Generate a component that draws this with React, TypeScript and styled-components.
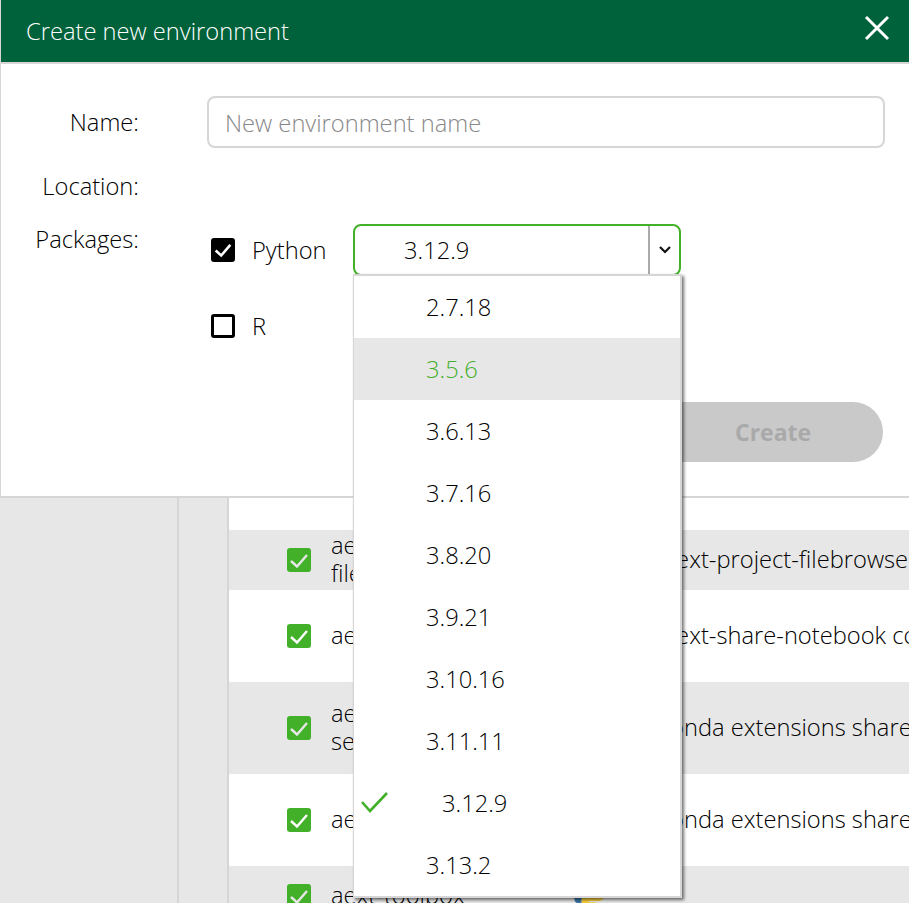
import React from "react";
import styled, { createGlobalStyle } from "styled-components";

const Global = createGlobalStyle`
  html, body { margin: 0; padding: 0; background: #fff; }
  body { width: 909px; height: 903px; overflow: hidden; font-family: "Open Sans", "Noto Sans", sans-serif; font-weight: 300; font-size: 23.7px; color: #000; }
  * { box-sizing: border-box; }
`;

const Page = styled.div`
  position: relative;
  width: 909px;
  height: 903px;
  overflow: hidden;
  padding-top: 496px;
`;

const Backdrop = styled.div`
  display: grid;
  grid-template-columns: 177px 2px 48px 2px 1fr;
  height: 407px;
  border-top: 2px solid #d6d6d6;
`;
const GreyCol = styled.div`background: #e7e7e7;`;
const Rule = styled.div`background: #d6d6d6;`;
const List = styled.div`
  padding-top: 32px;
  background: #fff;
  min-width: 0;
  overflow: hidden;
`;
const Row = styled.div<{ $grey?: boolean; $h: number }>`
  display: flex;
  align-items: center;
  height: ${(p) => p.$h}px;
  padding-left: 58px;
  background: ${(p) => (p.$grey ? "#e7e7e7" : "#fff")};
  line-height: 28px;
  white-space: nowrap;
`;
const RowCheck = styled.span`
  width: 24px;
  height: 24px;
  border-radius: 3px;
  background: #43b02a;
  display: flex;
  align-items: center;
  justify-content: center;
  flex: none;
  margin-right: 20px;
`;
const RowName = styled.div`
  width: 242px;
  flex: none;
  white-space: normal;
  padding-bottom: 2px;
`;
const RowDesc = styled.div`
  flex: none;
  padding-bottom: 2px;
`;
const Logo = styled.svg`
  flex: none;
  margin-right: 13px;
`;

const Dialog = styled.div`
  position: absolute;
  left: 0;
  top: 0;
  width: 909px;
  height: 496px;
  background: #fff;
  border-left: 1px solid #d6d6d6;
  display: flex;
  flex-direction: column;
`;
const Header = styled.div`
  height: 64px;
  flex: none;
  background: #00623b;
  border-bottom: 2px solid #d6d6d6;
  display: flex;
  align-items: center;
  justify-content: space-between;
  padding: 0 19px 0 25px;
  color: #fff;
`;
const Close = styled.svg`
  display: block;
  margin-bottom: 6px;
`;
const Form = styled.div`
  display: grid;
  grid-template-columns: 138px 1fr;
  column-gap: 68px;
  padding: 32px 24px 0 0;
`;
const Label = styled.div<{ $top: number }>`
  text-align: right;
  line-height: 30px;
  padding-top: ${(p) => p.$top}px;
`;
const NameInput = styled.div`
  height: 52px;
  border: 2px solid #d6d6d6;
  border-radius: 8px;
  padding-left: 16px;
  line-height: 50px;
  color: #888;
`;
const LocationValue = styled.div`height: 76px;`;
const Packages = styled.div`
  display: grid;
  grid-template-columns: 146px 328px;
  grid-auto-rows: 76px;
  align-items: start;
`;
const PackageLabel = styled.label`
  display: flex;
  align-items: center;
  gap: 17px;
  height: 52px;
  padding-left: 4px;
`;
const CheckBox = styled.span<{ $on?: boolean }>`
  width: 24px;
  height: 24px;
  flex: none;
  border-radius: 3px;
  border: 3px solid #000;
  background: ${(p) => (p.$on ? "#000" : "#fff")};
  display: flex;
  align-items: center;
  justify-content: center;
  & > svg { flex: none; }
`;
const Select = styled.div`
  height: 52px;
  border: 2px solid #43b02a;
  border-radius: 8px;
  display: flex;
  background: #fff;
`;
const SelectValue = styled.div`
  flex: 1;
  padding-left: 49px;
  line-height: 48px;
`;
const SelectArrow = styled.div`
  width: 31px;
  border-left: 2px solid #aaa;
  display: flex;
  align-items: center;
  justify-content: center;
`;
const Actions = styled.div`
  display: flex;
  justify-content: flex-end;
  margin-top: 26px;
  padding-right: 26px;
`;
const CreateButton = styled.div`
  width: 300px;
  height: 60px;
  border-radius: 30px;
  background: #c9c9c9;
  color: #a9a9a9;
  font-weight: 700;
  font-size: 23px;
  line-height: 60px;
  padding-left: 152px;
`;
const Menu = styled.div`
  position: absolute;
  left: 353px;
  top: 274px;
  width: 329px;
  height: 624px;
  background: #fff;
  border: solid #d6d6d6;
  border-width: 2px 2px 2px 1px;
  box-shadow: 2px 2px 3px rgba(0,0,0,0.55);
`;
const MenuItem = styled.div<{ $active?: boolean; $selected?: boolean }>`
  position: relative;
  height: 62px;
  line-height: 62px;
  padding-left: ${(p) => (p.$selected ? 88 : 72)}px;
  background: ${(p) => (p.$active ? "#e7e7e7" : "transparent")};
  color: ${(p) => (p.$active ? "#43b02a" : "#000")};
`;
const MenuCheck = styled.svg`position: absolute; left: 6px; top: 17px;`;

const Tick = ({ size, color, sw }: { size: number; color: string; sw: number }) => (
  <svg width={size} height={size} viewBox="0 0 24 24" fill="none">
    <path d="M4 12.5 L10 18 L20 6.5" stroke={color} strokeWidth={sw} />
  </svg>
);

const PythonLogo = () => (
  <Logo width="32" height="32" viewBox="0 0 26 26">
    <path d="M13 1c-5 0-6 2-6 4v3h6v1H5c-3 0-4 2-4 5s1 5 4 5h2v-3c0-2 2-4 4-4h5c2 0 3-1 3-3V5c0-2-2-4-6-4z" fill="#3a74a5" />
    <path d="M13 25c5 0 6-2 6-4v-3h-6v-1h8c3 0 4-2 4-5s-1-5-4-5h-2v3c0 2-2 4-4 4h-5c-2 0-3 1-3 3v4c0 2 2 4 6 4z" fill="#f7cf3d" />
  </Logo>
);

const versions = ["2.7.18", "3.5.6", "3.6.13", "3.7.16", "3.8.20", "3.9.21", "3.10.16", "3.11.11", "3.12.9", "3.13.2"];

const rows = [
  { h: 60, name: "aext-project-filebrowser-server", desc: "The aext-project-filebrowser-server", grey: true },
  { h: 92, name: "aext-panels", desc: "The aext-share-notebook core", grey: false },
  { h: 92, name: "aext-share-notebook-server", desc: "Anaconda extensions shared", grey: true },
  { h: 92, name: "aext-shared", desc: "Anaconda extensions shared", grey: false },
  { h: 60, name: "aext-toolbox", desc: "", grey: true },
];

export default function App() {
  return (
    <Page>
      <Global />
      <Backdrop>
        <GreyCol />
        <Rule />
        <GreyCol />
        <Rule />
        <List>
          {rows.map((r) => (
            <Row key={r.name} $grey={r.grey} $h={r.h}>
              <RowCheck><Tick size={27} color={r.grey ? "#e7e7e7" : "#fff"} sw={2.4} /></RowCheck>
              <RowName>{r.name}</RowName>
              <PythonLogo />
              <RowDesc>{r.desc}</RowDesc>
            </Row>
          ))}
        </List>
      </Backdrop>
      <Dialog>
        <Header>
          <span>Create new environment</span>
          <Close width="26" height="26" viewBox="0 0 26 26">
            <path d="M2 2 L24 24 M24 2 L2 24" stroke="#fff" strokeWidth="3" />
          </Close>
        </Header>
        <Form>
          <Label $top={11}>Name:</Label>
          <NameInput>New environment name</NameInput>
          <Label $top={23}>Location:</Label>
          <LocationValue />
          <Label $top={0}>Packages:</Label>
          <Packages>
            <PackageLabel><CheckBox $on><Tick size={22} color="#fff" sw={2.8} /></CheckBox>Python</PackageLabel>
            <Select>
              <SelectValue>3.12.9</SelectValue>
              <SelectArrow>
                <svg width="14" height="10" viewBox="0 0 14 10" fill="none"><path d="M2 2 L7 7 L12 2" stroke="#111" strokeWidth="2.2" /></svg>
              </SelectArrow>
            </Select>
            <PackageLabel><CheckBox /><span>R</span></PackageLabel>
          </Packages>
        </Form>
        <Actions><CreateButton>Create</CreateButton></Actions>
      </Dialog>
      <Menu>
        {versions.map((v) => (
          <MenuItem key={v} $active={v === "3.5.6"} $selected={v === "3.12.9"}>
            {v === "3.12.9" && (
              <MenuCheck width="28" height="26" viewBox="0 0 28 26" fill="none">
                <path d="M2 13 L10 22 L27 4" stroke="#43b02a" strokeWidth="2.6" />
              </MenuCheck>
            )}
            {v}
          </MenuItem>
        ))}
      </Menu>
    </Page>
  );
}
